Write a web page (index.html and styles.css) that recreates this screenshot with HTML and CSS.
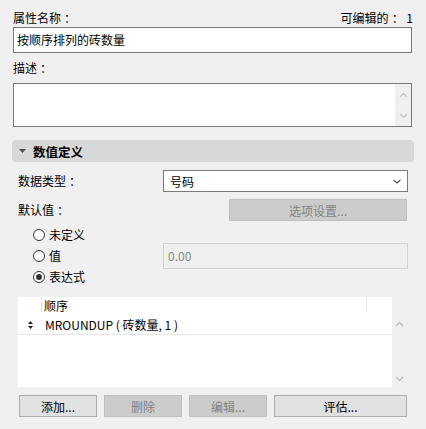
FILE: index.html
```html
<!DOCTYPE html>
<html lang="zh-CN">
<head>
<meta charset="utf-8">
<link rel="stylesheet" href="styles.css">
</head>
<body>
<div class="panel">
  <div class="top-row">
    <span>属性名称<span class="colon">：</span></span>
    <span>可编辑的<span class="colon">：</span> 1</span>
  </div>
  <div class="input">按顺序排列的砖数量</div>
  <div class="label desc-label">描述<span class="colon">：</span></div>
  <div class="textarea">
    <div class="vscroll">
      <svg width="9" height="6" viewBox="0 0 9 6"><path d="M1 5 L4.5 1.5 L8 5" fill="none" stroke="#c4c4c4" stroke-width="1.3"/></svg>
      <svg width="9" height="6" viewBox="0 0 9 6"><path d="M1 1 L4.5 4.5 L8 1" fill="none" stroke="#c4c4c4" stroke-width="1.3"/></svg>
    </div>
  </div>

  <div class="section-head">
    <svg class="tri" width="7" height="4" viewBox="0 0 7 4"><path d="M0 0 H7 L3.5 4 Z" fill="#505050"/></svg>
    <span>数值定义</span>
  </div>

  <div class="section">
    <div class="row row-type">
      <span class="label">数据类型<span class="colon">：</span></span>
      <div class="select">
        <span>号码</span>
        <svg width="8" height="5" viewBox="0 0 8 5"><path d="M0.5 0.8 L4 4 L7.5 0.8" fill="none" stroke="#444" stroke-width="1.1"/></svg>
      </div>
    </div>
    <div class="row row-default">
      <span class="label">默认值<span class="colon">：</span></span>
      <div class="btn disabled opt-btn">选项设置...</div>
    </div>
    <div class="radio-row">
      <span class="radio"></span><span>未定义</span>
    </div>
    <div class="radio-row">
      <span class="radio"></span><span>值</span>
      <div class="value-field">0.00</div>
    </div>
    <div class="radio-row">
      <span class="radio checked"></span><span>表达式</span>
    </div>

    <div class="list">
      <div class="list-main">
        <div class="list-head">
          <span class="col-icon"></span>
          <span class="col-name">顺序</span>
          <span class="col-extra"></span>
        </div>
        <div class="list-rowline">
          <span class="col-icon">
            <svg width="5" height="8" viewBox="0 0 5 8"><path d="M2.5 0 L5 3 H0 Z M2.5 8 L5 5 H0 Z" fill="#222"/></svg>
          </span>
          <span class="col-name">MROUNDUP ( 砖数量, 1 )</span>
        </div>
      </div>
      <div class="list-scroll">
        <svg width="9" height="6" viewBox="0 0 9 6"><path d="M1 5 L4.5 1.5 L8 5" fill="none" stroke="#bdbdbd" stroke-width="1.3"/></svg>
        <svg width="9" height="6" viewBox="0 0 9 6"><path d="M1 1 L4.5 4.5 L8 1" fill="none" stroke="#bdbdbd" stroke-width="1.3"/></svg>
      </div>
    </div>

    <div class="buttons">
      <div class="btn">添加...</div>
      <div class="btn disabled">删除</div>
      <div class="btn disabled">编辑...</div>
      <div class="btn">评估...</div>
    </div>
  </div>
</div>
</body>
</html>
```

FILE: styles.css
```css
html, body {
  margin: 0;
  padding: 0;
  background: #f0f0f0;
}
body {
  font-family: "Noto Sans CJK SC", "Microsoft YaHei", sans-serif;
  font-size: 12px;
  color: #000;
  width: 426px;
  height: 429px;
  overflow: hidden;
}
.colon {
  margin-left: 3px;
}
.panel {
  width: 400px;
  padding: 9px 0 0 13px;
}
.top-row {
  display: flex;
  justify-content: space-between;
  height: 18px;
  line-height: 18px;
}
.input {
  box-sizing: border-box;
  height: 26px;
  width: 399px;
  border: 1px solid #7a7a7a;
  background: #fff;
  padding-left: 3px;
  line-height: 24px;
}
.label {
  line-height: 18px;
  height: 18px;
}
.desc-label {
  margin: 6px 0 6px;
}
.textarea {
  box-sizing: border-box;
  height: 44px;
  width: 399px;
  border: 1px solid #7a7a7a;
  background: #fff;
  display: flex;
  justify-content: flex-end;
}
.vscroll {
  width: 16px;
  background: #f0f0f0;
  display: flex;
  flex-direction: column;
  justify-content: space-between;
  align-items: center;
  padding: 8px 0 7px;
  box-sizing: border-box;
}
.section-head {
  margin: 13px -1px 0 -1px;
  height: 22px;
  background: #d8d8d8;
  border-radius: 4px;
  display: flex;
  align-items: center;
  font-weight: bold;
  font-size: 12.5px;
}
.section-head .tri {
  margin: 0 7px 0 7px;
}
.section {
  padding: 0 5px 0 5px;
}
.row {
  display: flex;
  justify-content: space-between;
  align-items: center;
}
.row-type {
  margin-top: 8px;
  height: 22px;
}
.select {
  box-sizing: border-box;
  width: 245px;
  height: 22px;
  border: 1px solid #7a7a7a;
  background: #fff;
  display: flex;
  align-items: center;
  justify-content: space-between;
  padding: 0 6px 0 6px;
}
.row-default {
  margin-top: 7px;
  height: 22px;
}
.btn {
  box-sizing: border-box;
  height: 22px;
  border: 1px solid #adadad;
  background: #e1e1e1;
  display: flex;
  align-items: center;
  justify-content: center;
}
.btn.disabled {
  background: #cccccc;
  border-color: #bfbfbf;
  color: #838383;
}
.opt-btn {
  width: 178px;
  margin-right: 1px;
}
.radio-row {
  display: flex;
  align-items: center;
  height: 21px;
  padding-left: 15px;
}
.row-default + .radio-row {
  margin-top: 3px;
}
.radio {
  box-sizing: border-box;
  width: 12px;
  height: 12px;
  border: 1px solid #333;
  border-radius: 50%;
  background: #fff;
  margin-right: 4px;
  display: flex;
  align-items: center;
  justify-content: center;
}
.radio.checked::after {
  content: "";
  width: 6px;
  height: 6px;
  border-radius: 50%;
  background: #333;
}
.value-field {
  box-sizing: border-box;
  margin-left: auto;
  width: 245px;
  height: 26px;
  border: 1px solid #d4d4d4;
  background: #f0f0f0;
  color: #8a8a8a;
  padding-left: 4px;
  display: flex;
  align-items: center;
}
.list {
  margin-top: 10px;
  height: 90px;
  display: flex;
  width: 388px;
}
.list-main {
  width: 374px;
  background: #fff;
}
.list-head {
  display: flex;
  height: 18px;
  line-height: 18px;
}
.list-head .col-icon {
  border-right: 1px solid #e3e3e3;
  height: 15px;
}
.col-icon {
  width: 24px;
  flex: none;
  display: flex;
  align-items: center;
  justify-content: center;
  padding-left: 1px;
  box-sizing: border-box;
}
.col-name {
  padding-left: 3px;
  flex: 1;
}
.list-head .col-name {
  padding-left: 2px;
}
.col-extra {
  width: 24px;
  border-left: 1px solid #e3e3e3;
  height: 15px;
  margin-right: 2px;
  box-sizing: border-box;
}
.list-rowline {
  display: flex;
  align-items: center;
  height: 19px;
  border-bottom: 1px solid #e6e6e6;
}
.list-scroll {
  flex: 1;
  margin-top: 18px;
  display: flex;
  flex-direction: column;
  justify-content: space-between;
  align-items: center;
  padding: 6px 0 5px;
}
.buttons {
  margin-top: 8px;
  display: grid;
  grid-template-columns: 78px 78px 78px 1fr;
  column-gap: 7px;
  width: 388px;
  margin-left: 1px;
}
```
